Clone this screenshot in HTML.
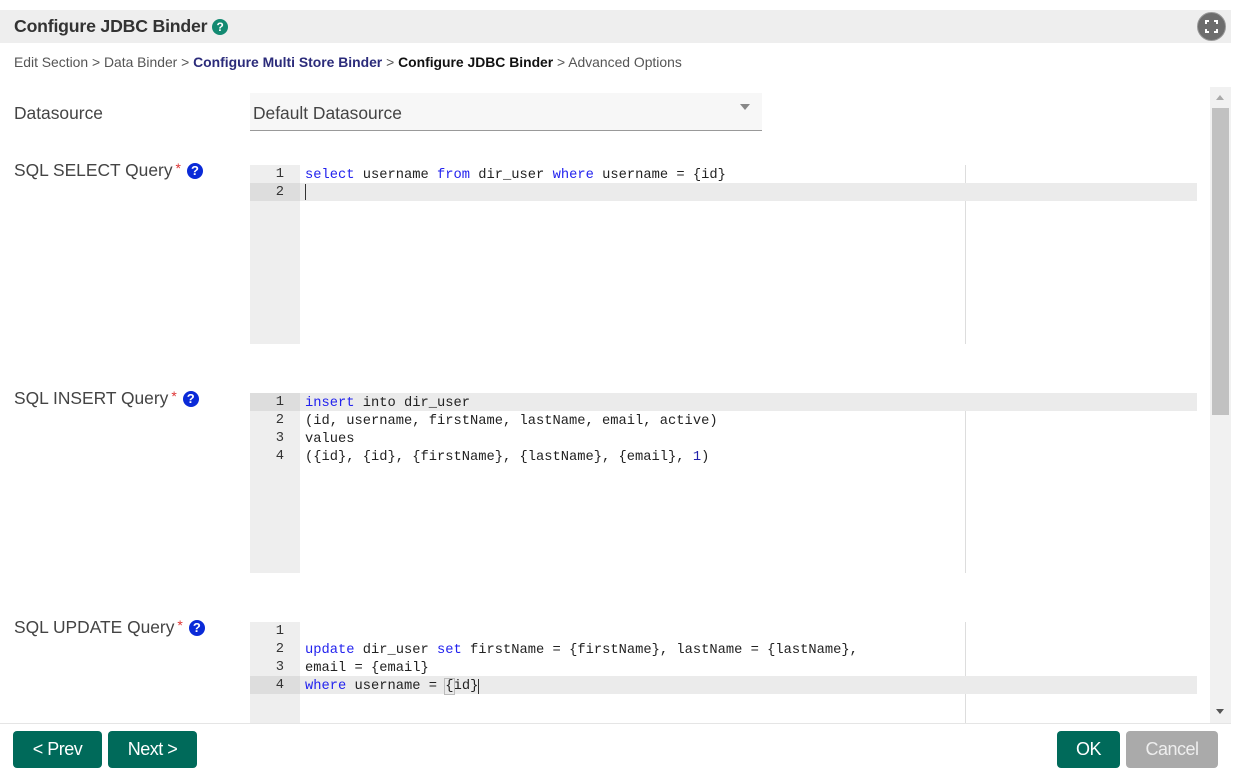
<!DOCTYPE html>
<html><head><meta charset="utf-8"><style>
*{margin:0;padding:0;box-sizing:border-box}
body{width:1234px;height:780px;background:#fff;position:relative;overflow:hidden;font-family:"Liberation Sans",Arial,sans-serif;color:#444}
.abs{position:absolute}
.hdr{left:0;top:10px;width:1231px;height:33px;background:#eee}
.title{left:14px;top:16px;font-size:17.7px;font-weight:bold;color:#333;letter-spacing:-0.2px}
.crumb{left:14px;top:54px;font-size:13.9px;color:#555}
.crumb b{color:#2b2b7a}
.crumb b.k{color:#111}
.lbl{left:14px;font-size:17.4px;color:#444}
.star{color:#d33;font-size:14px;vertical-align:top;margin-left:3px}
.q{display:inline-block;width:16px;height:16px;border-radius:50%;background:#0a2ad8;color:#fff;font-size:13px;font-weight:bold;text-align:center;line-height:16px;vertical-align:1px;margin-left:6px}
.ed{left:250px;width:947px;font-family:"Liberation Mono",monospace;font-size:13.75px;color:#222}
.gut{position:absolute;left:0;top:0;width:50px;height:100%;background:#eee}
.vl{position:absolute;left:715px;top:0;width:1px;height:100%;background:#ddd}
.ln{position:absolute;left:0;width:947px;height:18px;line-height:18px}
.ln .n{position:absolute;left:0;width:34px;text-align:right;color:#333;top:1px}
.ln .t{position:absolute;left:55px;white-space:pre;top:2px}
.ln.act{background:#ebebeb}
.ln.act .n{background:#ddd;width:50px;padding-right:16px;top:0;height:18px;line-height:20px}
.kw{color:#2222ee}.num{color:#22a}
.btn{top:731px;height:37px;border-radius:4px;background:#006a5a;color:#fff;font-size:18px;text-align:center;line-height:37px;letter-spacing:-0.5px}
</style></head><body>
<div class="abs hdr"></div>
<div class="abs title">Configure JDBC Binder <span class="q" style="background:#138a72;width:16px;height:16px;line-height:16px;font-size:12px;margin-left:0">?</span></div>
<div class="abs" style="left:1197px;top:12px;width:29px;height:29px;border-radius:50%;background:#6d6d6d;border:1px solid #999">
<svg width="27" height="27" viewBox="0 0 27 27"><path d="M8 11V8h3M16 8h3v3M19 16v3h-3M11 19H8v-3" stroke="#fff" stroke-width="2" fill="none"/></svg></div>
<div class="abs crumb">Edit Section &gt; Data Binder &gt; <b>Configure Multi Store Binder</b> &gt; <b class="k">Configure JDBC Binder</b> &gt; Advanced Options</div>

<div class="abs lbl" style="top:103px">Datasource</div>
<div class="abs" style="left:250px;top:93px;width:512px;height:38px;background:#f7f7f7;border-bottom:1px solid #999;font-size:17.4px;color:#444;padding:10px 3px">Default Datasource</div>
<div class="abs" style="left:740px;top:104px;width:0;height:0;border-left:5px solid transparent;border-right:5px solid transparent;border-top:6px solid #888"></div>

<div class="abs lbl" style="top:160px">SQL SELECT Query<span class="star">*</span><span class="q">?</span></div>
<div class="abs ed" style="top:165px;height:179px"><div class="gut"></div><div class="vl"></div>
<div class="ln" style="top:0"><span class="n">1</span><span class="t"><span class="kw">select</span> username <span class="kw">from</span> dir_user <span class="kw">where</span> username = {id}</span></div>
<div class="ln act" style="top:18px"><span class="n">2</span><span class="t" style="border-left:1px solid #333;height:16px;top:1px"></span></div>
</div>

<div class="abs lbl" style="top:388px">SQL INSERT Query<span class="star">*</span><span class="q">?</span></div>
<div class="abs ed" style="top:393px;height:180px"><div class="gut"></div><div class="vl"></div>
<div class="ln act" style="top:0"><span class="n">1</span><span class="t"><span class="kw">insert</span> into dir_user</span></div>
<div class="ln" style="top:18px"><span class="n">2</span><span class="t">(id, username, firstName, lastName, email, active)</span></div>
<div class="ln" style="top:36px"><span class="n">3</span><span class="t">values</span></div>
<div class="ln" style="top:54px"><span class="n">4</span><span class="t">({id}, {id}, {firstName}, {lastName}, {email}, <span class="num">1</span>)</span></div>
</div>

<div class="abs lbl" style="top:617px">SQL UPDATE Query<span class="star">*</span><span class="q">?</span></div>
<div class="abs ed" style="top:622px;height:102px"><div class="gut"></div><div class="vl"></div>
<div class="ln" style="top:0"><span class="n">1</span></div>
<div class="ln" style="top:18px"><span class="n">2</span><span class="t"><span class="kw">update</span> dir_user <span class="kw">set</span> firstName = {firstName}, lastName = {lastName},</span></div>
<div class="ln" style="top:36px"><span class="n">3</span><span class="t">email = {email}</span></div>
<div class="ln act" style="top:54px"><span class="n">4</span><span class="t"><span class="kw">where</span> username = <span style="outline:1px solid #bbb">{</span>id}<span style="border-left:1px solid #333"></span></span></div>
</div>

<div class="abs" style="left:1210px;top:87px;width:21px;height:636px;background:#f1f1f1"></div>
<div class="abs" style="left:1212px;top:108px;width:17px;height:307px;background:#c1c1c1"></div>
<div class="abs" style="left:1216px;top:95px;border-left:4px solid transparent;border-right:4px solid transparent;border-bottom:5px solid #aaa"></div>
<div class="abs" style="left:1216px;top:709px;border-left:4px solid transparent;border-right:4px solid transparent;border-top:5px solid #555"></div>
<div class="abs" style="left:0;top:723px;width:1231px;height:1px;background:#e5e5e5"></div>

<div class="abs btn" style="left:13px;width:89px">&lt; Prev</div>
<div class="abs btn" style="left:108px;width:89px">Next &gt;</div>
<div class="abs btn" style="left:1057px;width:63px">OK</div>
<div class="abs btn" style="left:1126px;width:92px;background:#aaa;color:#eee">Cancel</div>
</body></html>
